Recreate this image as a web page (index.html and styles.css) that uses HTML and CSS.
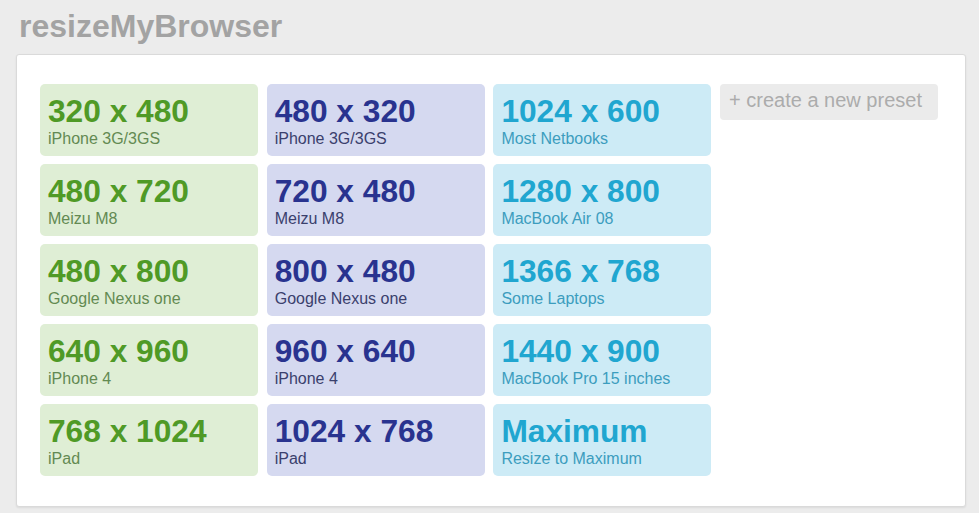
FILE: index.html
```
<!DOCTYPE html>
<html>
<head>
<meta charset="utf-8">
<title>resizeMyBrowser</title>
<link rel="stylesheet" href="styles.css">
</head>
<body>
<header class="header">resizeMyBrowser</header>
<main class="panel">
  <div class="grid">
    <a class="tile green"><div class="size">320 x 480</div><div class="name">iPhone 3G/3GS</div></a>
    <a class="tile blue"><div class="size">480 x 320</div><div class="name">iPhone 3G/3GS</div></a>
    <a class="tile cyan"><div class="size">1024 x 600</div><div class="name">Most Netbooks</div></a>
    <a class="create">+ create a new preset</a>

    <a class="tile green"><div class="size">480 x 720</div><div class="name">Meizu M8</div></a>
    <a class="tile blue"><div class="size">720 x 480</div><div class="name">Meizu M8</div></a>
    <a class="tile cyan"><div class="size">1280 x 800</div><div class="name">MacBook Air 08</div></a>
    <div class="empty"></div>

    <a class="tile green"><div class="size">480 x 800</div><div class="name">Google Nexus one</div></a>
    <a class="tile blue"><div class="size">800 x 480</div><div class="name">Google Nexus one</div></a>
    <a class="tile cyan"><div class="size">1366 x 768</div><div class="name">Some Laptops</div></a>
    <div class="empty"></div>

    <a class="tile green"><div class="size">640 x 960</div><div class="name">iPhone 4</div></a>
    <a class="tile blue"><div class="size">960 x 640</div><div class="name">iPhone 4</div></a>
    <a class="tile cyan"><div class="size">1440 x 900</div><div class="name">MacBook Pro 15 inches</div></a>
    <div class="empty"></div>

    <a class="tile green"><div class="size">768 x 1024</div><div class="name">iPad</div></a>
    <a class="tile blue"><div class="size">1024 x 768</div><div class="name">iPad</div></a>
    <a class="tile cyan"><div class="size">Maximum</div><div class="name">Resize to Maximum</div></a>
    <div class="empty"></div>
  </div>
</main>
</body>
</html>
```
FILE: styles.css
```
html, body {
  margin: 0;
  padding: 0;
}
body {
  background: #ececec;
  font-family: "Liberation Sans", Arial, sans-serif;
  width: 979px;
  height: 513px;
  overflow: hidden;
}
.header {
  box-sizing: border-box;
  height: 54px;
  padding: 8px 0 0 19px;
  font-size: 32px;
  line-height: 36px;
  font-weight: bold;
  color: #a3a3a3;
}
.panel {
  box-sizing: border-box;
  margin-left: 16px;
  width: 950px;
  height: 453px;
  background: #ffffff;
  border: 1px solid #dadada;
  border-radius: 3px;
  box-shadow: 0 1px 2px rgba(0,0,0,0.08);
  padding: 29px 0 0 23px;
}
.grid {
  display: grid;
  grid-template-columns: repeat(4, 218px);
  grid-auto-rows: 72px;
  column-gap: 8.7px;
  row-gap: 8px;
}
.tile {
  display: block;
  box-sizing: border-box;
  padding: 9px 8px 0 8px;
  border-radius: 5px;
  text-decoration: none;
}
.size {
  font-size: 31.7px;
  line-height: 36px;
  font-weight: bold;
  white-space: nowrap;
}
.name {
  font-size: 16px;
  line-height: 19px;
  white-space: nowrap;
}
.green { background: #dfeed5; }
.green .size { color: #4f9a26; }
.green .name { color: #638a52; }
.blue { background: #d5d9f0; }
.blue .size { color: #29338f; }
.blue .name { color: #3a406d; }
.cyan { background: #cdebf6; }
.cyan .size { color: #20a6d0; }
.cyan .name { color: #3c9dbe; }
.create {
  display: block;
  box-sizing: border-box;
  height: 36px;
  padding: 5px 0 0 9px;
  background: #ebebeb;
  border-radius: 4px;
  color: #acacac;
  font-size: 20px;
  line-height: 23px;
  white-space: nowrap;
  align-self: start;
}
```
